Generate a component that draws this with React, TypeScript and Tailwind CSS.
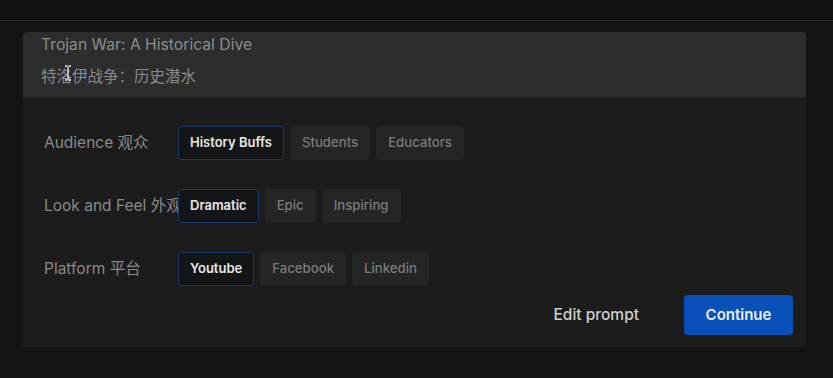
import React from "react";

const font = { fontFamily: 'Inter, "Noto Sans CJK SC", sans-serif' };

function Opt({ label, selected }: { label: string; selected?: boolean }) {
  return (
    <div
      className={
        "relative z-10 h-[34px] flex items-center px-[11px] rounded-[3px] whitespace-nowrap " +
        (selected
          ? "text-[13px] bg-[#141516] border border-[#1d3768] text-[#e8e8e8] font-semibold"
          : "text-[13.2px] bg-[#252525] border border-[#252525] text-[#7a7a7a] font-medium")
      }
    >
      {label}
    </div>
  );
}

function Row({ label, opts }: { label: string; opts: string[] }) {
  return (
    <div className="flex items-center h-[34px]">
      <div className="w-[134px] shrink-0 whitespace-nowrap text-[15.5px] text-[#8a8a8a]">{label}</div>
      <div className="flex gap-[6px]">
        {opts.map((o, i) => (
          <Opt key={o} label={o} selected={i === 0} />
        ))}
      </div>
    </div>
  );
}

export default function App() {
  return (
    <div className="w-[833px] h-[378px] bg-[#141414] overflow-hidden" style={font}>
      <div className="h-[20px] bg-[#131313]" />
      <div className="h-px bg-[#2a2a2a]" />
      <div className="pl-[23px] pr-[27px] pt-[11px]">
        <div className="rounded-t-[4px] bg-[#1c1c1c] h-[315px] flex flex-col">
          <div className="relative bg-[#2d2d2d] h-[65px] rounded-t-[4px] pl-[18px] pt-[3px]">
            <div className="text-[15.7px] text-[#8c8c8c] leading-[20px]">Trojan War: A Historical Dive</div>
            <div className="text-[15.5px] text-[#8a8a8a] leading-[20px] mt-[12px]">特洛伊战争：历史潜水</div>
            <svg className="absolute left-[41px] top-[33px]" width="8" height="16" viewBox="0 0 8 16">
              <path d="M1 1h2.5M4.5 1H7M4 1.5v13M1 15h2.5M4.5 15H7" stroke="#e6e6e6" strokeWidth="1.3" fill="none" />
            </svg>
          </div>
          <div className="pl-[21px] pt-[29px] flex flex-col gap-[29px]">
            <Row label="Audience 观众" opts={["History Buffs", "Students", "Educators"]} />
            <Row label="Look and Feel 外观" opts={["Dramatic", "Epic", "Inspiring"]} />
            <Row label="Platform 平台" opts={["Youtube", "Facebook", "Linkedin"]} />
          </div>
          <div className="flex justify-end items-center pr-[13px] mt-[9px]">
            <div className="text-[15.5px] text-[#cfcfcf] font-medium mr-[45px]">Edit prompt</div>
            <div className="w-[109px] h-[40px] rounded-[4px] bg-[#0b4fb8] flex items-center justify-center text-[15px] font-semibold text-[#e8eefa]">
              Continue
            </div>
          </div>
        </div>
      </div>
    </div>
  );
}
